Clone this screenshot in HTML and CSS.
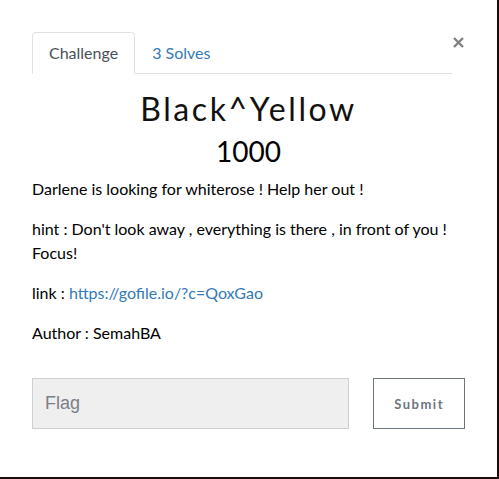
FILE: index.html
```html
<!DOCTYPE html>
<html>
<head>
<meta charset="utf-8">
<link rel="stylesheet" href="styles.css">
</head>
<body>
<div class="modal">
  <div class="modal-body">
    <div class="head">
      <ul class="tabs">
        <li class="tab active">Challenge</li>
        <li class="tab">3 Solves</li>
      </ul>
      <button class="close" aria-label="Close">
        <svg width="11" height="11" viewBox="0 0 11 11"><path d="M1 1 L10 10 M10 1 L1 10" stroke="#808080" stroke-width="2.4" stroke-linecap="butt"/></svg>
      </button>
    </div>
    <h2 class="title">Black^Yellow</h2>
    <h3 class="value">1000</h3>
    <div class="desc">
      <p>Darlene is looking for whiterose ! Help her out !</p>
      <p>hint : Don't look away , everything is there , in front of you ! Focus!</p>
      <p>link : <a href="#">https://gofile.io/?c=QoxGao</a></p>
      <p>Author : SemahBA</p>
    </div>
    <div class="submit-row">
      <input class="flag" type="text" placeholder="Flag">
      <button class="submit">Submit</button>
    </div>
  </div>
</div>
</body>
</html>
```

FILE: styles.css
```css
html, body {
  margin: 0;
  padding: 0;
  background: #1c0b0b;
  width: 499px;
  height: 479px;
  overflow: hidden;
}
.modal {
  width: 497px;
  height: 477px;
  background: #fff;
  font-family: "Lato", "Open Sans", sans-serif;
  color: #212529;
}
.modal-body {
  padding: 32px 32px 0 32px;
}
.head {
  display: flex;
  align-items: flex-start;
}
.tabs {
  list-style: none;
  margin: 0;
  padding: 0;
  display: flex;
  width: 420px;
  border-bottom: 1px solid #dee2e6;
}
.tab {
  padding: 8px 16px;
  font-size: 16px;
  line-height: 24px;
  color: #337ab7;
  border: 1px solid transparent;
  border-top-left-radius: 4px;
  border-top-right-radius: 4px;
  margin-bottom: -1px;
}
.tab.active {
  color: #495057;
  border-color: #dee2e6 #dee2e6 #fff;
  background: #fff;
}
.close {
  background: none;
  border: 0;
  padding: 0;
  margin: 5px 0 0 1px;
  width: 11px;
  height: 11px;
  display: block;
}
.close svg { display: block; }
.title {
  margin: 16px 0 0;
  text-align: center;
  font-family: "Lato", sans-serif;
  font-weight: 400;
  font-size: 32px;
  line-height: 38px;
  letter-spacing: 2.6px;
  color: #111;
}
.value {
  margin: 6px 0 0;
  text-align: center;
  font-weight: 400;
  font-size: 28px;
  line-height: 34px;
  color: #000;
}
.desc {
  margin-top: 9px;
}
.desc p {
  margin: 0 0 16px;
  font-size: 16px;
  line-height: 24px;
  color: #000;
  width: 420px;
}
.desc a {
  color: #337ab7;
  text-decoration: none;
}
.submit-row {
  display: flex;
  align-items: flex-start;
  margin-top: 33px;
}
.flag {
  box-sizing: border-box;
  width: 318px;
  height: 51px;
  background: #efefef;
  border: 1px solid #ccd0d4;
  padding: 0 12px;
  font-family: "Liberation Sans", Arial, sans-serif;
  font-size: 18px;
  color: #495057;
  outline: none;
  border-radius: 0;
}
.flag::placeholder {
  color: #7b8087;
}
.submit {
  box-sizing: border-box;
  margin-left: 24px;
  width: 92px;
  height: 51px;
  background: #fff;
  border: 1px solid #6c757d;
  border-radius: 0;
  color: #6c757d;
  font-family: "Lato", sans-serif;
  font-weight: 700;
  font-size: 13px;
  letter-spacing: 1.5px;
  padding: 0;
}
```
